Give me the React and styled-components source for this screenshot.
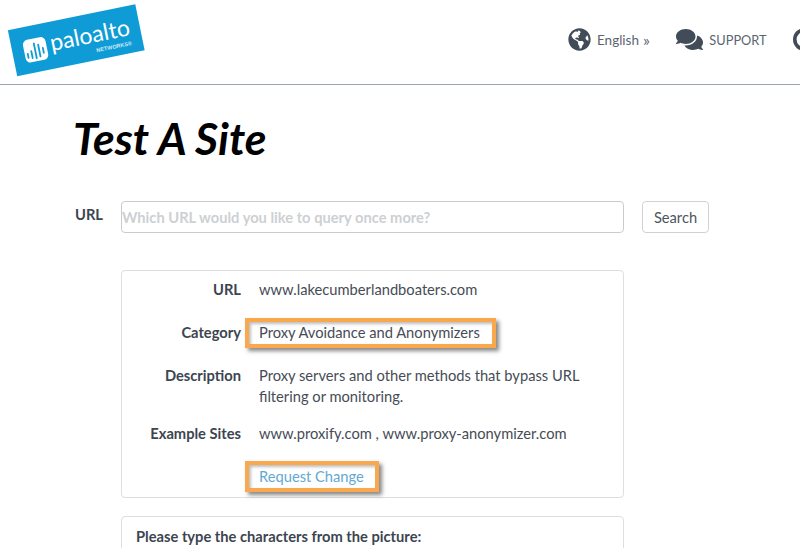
import React from "react";
import styled, { createGlobalStyle } from "styled-components";
import { FaGlobeAmericas, FaComments } from "react-icons/fa";

const GlobalStyle = createGlobalStyle`
  html, body {
    margin: 0;
    padding: 0;
    background: #fff;
    height: 548px;
    overflow: hidden;
  }
  body {
    font-family: Lato, "Open Sans", sans-serif;
    font-size: 14.7px;
    color: #464c55;
  }
`;

const Page = styled.div`
  width: 800px;
  height: 548px;
  overflow: hidden;
`;

const Header = styled.header`
  height: 84px;
  border-bottom: 1px solid #9aa5b1;
  display: flex;
  align-items: flex-start;
  justify-content: space-between;
  overflow: hidden;
`;

const LogoWrap = styled.div`
  width: 150px;
  height: 80px;
  flex: none;
`;

const Nav = styled.nav`
  display: flex;
  align-items: center;
  gap: 26.5px;
  width: 232px;
  flex: none;
  height: 79px;
`;

const NavItem = styled.a`
  display: flex;
  align-items: center;
  gap: 6px;
  font-size: ${(p) => p.$size || 13}px;
  color: #5b6470;
  white-space: nowrap;
  flex: none;
  svg {
    color: #414c58;
    flex: none;
  }
`;

const Chevrons = styled.span`
  font-size: 16px;
  line-height: 13px;
  margin-left: -2px;
`;

const Main = styled.main`
  padding: 0 0 0 74px;
`;

const Title = styled.h1`
  margin: 27px 0 37px -1px;
  font-size: 44.6px;
  line-height: 52px;
  font-weight: 700;
  font-style: italic;
  color: #000;
`;

const SearchRow = styled.form`
  display: flex;
  align-items: flex-start;
  height: 32px;
  margin: 0;
`;

const UrlLabel = styled.label`
  width: 46px;
  flex: none;
  padding-left: 1px;
  font-weight: 700;
  font-size: 14.7px;
  line-height: 26px;
  color: #3c4550;
`;

const UrlInput = styled.input`
  width: 503px;
  height: 32px;
  box-sizing: border-box;
  border: 1px solid #c9cccf;
  border-radius: 4px;
  padding: 0;
  font-family: inherit;
  font-size: 14.7px;
  font-weight: 700;
  outline: none;
  &::placeholder {
    color: #cdd0d3;
    opacity: 1;
  }
`;

const SearchButton = styled.button`
  width: 67px;
  height: 32px;
  margin-left: 18px;
  box-sizing: border-box;
  border: 1px solid #d0d3d6;
  border-radius: 4px;
  background: #fff;
  font-family: inherit;
  font-size: 14.7px;
  color: #4d5560;
  padding: 0;
`;

const Panel = styled.section`
  width: 503px;
  margin-left: 47px;
  box-sizing: border-box;
  border: 1px solid #dcdee0;
  border-radius: 4px;
`;

const ResultPanel = styled(Panel)`
  margin-top: 37px;
  height: 228px;
  padding-top: 8px;
`;

const CaptchaPanel = styled(Panel)`
  margin-top: 18px;
  height: 80px;
  padding: 9px 14px;
  font-weight: 700;
  line-height: 21px;
  color: #3c4550;
`;

const Row = styled.div`
  display: grid;
  grid-template-columns: 119px 325px;
  column-gap: 18px;
  line-height: 21px;
  margin-bottom: ${(p) => p.$gap}px;
`;

const Label = styled.div`
  text-align: right;
  font-weight: 700;
  color: #3c4550;
`;

const Value = styled.div`
  color: #464c55;
`;

const Highlight = styled.span`
  position: relative;
  display: inline-block;
  &::after {
    content: "";
    position: absolute;
    top: ${(p) => p.$top}px;
    bottom: ${(p) => p.$bottom}px;
    left: -14px;
    right: ${(p) => p.$right}px;
    border: 4px solid #f9a84d;
    box-shadow: 3px 3px 4px rgba(70, 70, 70, 0.65), inset 2px 2px 3px rgba(70, 70, 70, 0.35);
    pointer-events: none;
  }
`;

const RequestLink = styled.a`
  color: #62a9d3;
`;

function Logo() {
  return (
    <svg width="150" height="80" viewBox="0 0 150 80">
      <g transform="rotate(-11.5 76.25 40.25)">
        <rect x="11.25" y="16.75" width="130" height="47" fill="#0f9cd6" />
        <rect x="23" y="30" width="23" height="23" rx="5" fill="#fff" />
        <g stroke="#0f9cd6" strokeWidth="1.8" strokeLinecap="round">
          <path d="M26 44v4M30 42v7M34 35v15M38 37v12M42 41v5" />
        </g>
        <text x="50" y="46" fill="#fff" fontFamily="Lato, sans-serif" fontSize="23">paloalto</text>
        <text x="94" y="56" fill="#cdeaf8" fontFamily="Liberation Sans, sans-serif" fontSize="5.5" fontWeight="700">NETWORKS®</text>
      </g>
    </svg>
  );
}

function RingIcon() {
  return (
    <svg width="23" height="23" viewBox="0 0 23 23">
      <circle cx="11.5" cy="11.5" r="9.7" fill="none" stroke="#414c58" strokeWidth="3.6" />
    </svg>
  );
}

export default function App() {
  return (
    <Page>
      <GlobalStyle />
      <Header>
        <LogoWrap>
          <Logo />
        </LogoWrap>
        <Nav>
          <NavItem $size={13.5}>
            <FaGlobeAmericas size={23} />
            English <Chevrons>»</Chevrons>
          </NavItem>
          <NavItem $size={12.8}>
            <FaComments size={27} />
            SUPPORT
          </NavItem>
          <NavItem>
            <RingIcon />
          </NavItem>
        </Nav>
      </Header>
      <Main>
        <Title>Test A Site</Title>
        <SearchRow onSubmit={(e) => e.preventDefault()}>
          <UrlLabel>URL</UrlLabel>
          <UrlInput placeholder="Which URL would you like to query once more?" />
          <SearchButton>Search</SearchButton>
        </SearchRow>
        <ResultPanel>
          <Row $gap={22}>
            <Label>URL</Label>
            <Value>www.lakecumberlandboaters.com</Value>
          </Row>
          <Row $gap={22}>
            <Label>Category</Label>
            <Value>
              <Highlight $top={-4} $bottom={-5} $right={-16}>Proxy Avoidance and Anonymizers</Highlight>
            </Value>
          </Row>
          <Row $gap={16}>
            <Label>Description</Label>
            <Value>Proxy servers and other methods that bypass URL filtering or monitoring.</Value>
          </Row>
          <Row $gap={22}>
            <Label>Example Sites</Label>
            <Value>www.proxify.com , www.proxy-anonymizer.com</Value>
          </Row>
          <Row $gap={0}>
            <span />
            <Value>
              <Highlight $top={-5} $bottom={-5} $right={-15}>
                <RequestLink>Request Change</RequestLink>
              </Highlight>
            </Value>
          </Row>
        </ResultPanel>
        <CaptchaPanel>Please type the characters from the picture:</CaptchaPanel>
      </Main>
    </Page>
  );
}
